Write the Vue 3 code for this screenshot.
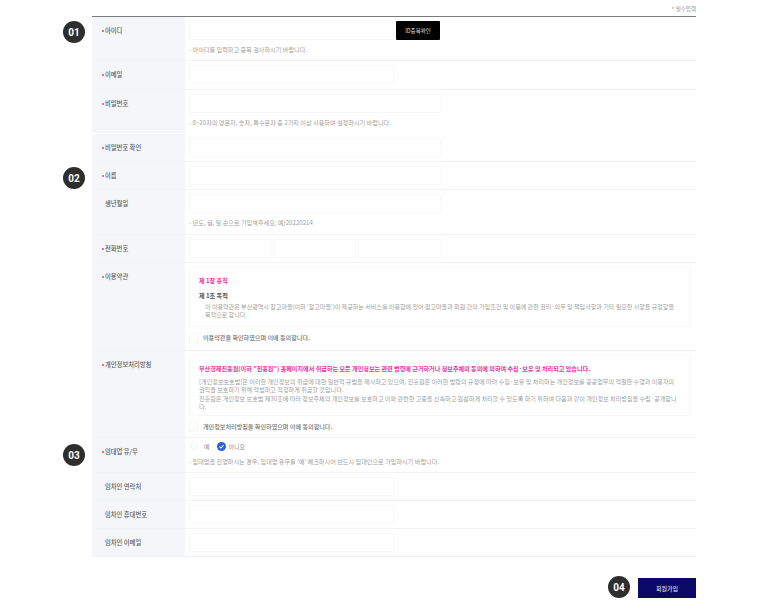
<script setup>
const tenantRows = ['임차인 연락처', '임차인 휴대번호', '임차인 이메일']
</script>

<template>
  <div class="join-page">
    <p class="required-note"><span class="star">*</span> 필수입력</p>

    <div class="form-table">
      <span class="step-badge step-one">01</span>
      <span class="step-badge step-two">02</span>
      <span class="step-badge step-three">03</span>

      <div class="form-row row-hint">
        <div class="form-label required">아이디</div>
        <div class="form-cell">
          <div class="id-line">
            <div class="text-input"></div>
            <button type="button" class="check-btn">ID중복확인</button>
          </div>
          <p class="hint">- 아이디를 입력하고 중복 검사하시기 바랍니다.</p>
        </div>
      </div>

      <div class="form-row row-email">
        <div class="form-label required">이메일</div>
        <div class="form-cell">
          <div class="text-input short"></div>
        </div>
      </div>

      <div class="form-row row-hint no-line">
        <div class="form-label required">비밀번호</div>
        <div class="form-cell">
          <div class="text-input"></div>
          <p class="hint">- 8~20자의 영문자, 숫자, 특수문자 중 2가지 이상 사용하여 설정하시기 바랍니다.</p>
        </div>
      </div>

      <div class="form-row">
        <div class="form-label required">비밀번호 확인</div>
        <div class="form-cell">
          <div class="text-input"></div>
        </div>
      </div>

      <div class="form-row">
        <div class="form-label required">이름</div>
        <div class="form-cell">
          <div class="text-input"></div>
        </div>
      </div>

      <div class="form-row row-birth">
        <div class="form-label">생년월일</div>
        <div class="form-cell">
          <div class="text-input"></div>
          <p class="hint">- 년도, 월, 일 순으로 기입해주세요. 예)20220214</p>
        </div>
      </div>

      <div class="form-row">
        <div class="form-label required">전화번호</div>
        <div class="form-cell">
          <div class="tel-line">
            <div class="text-input"></div>
            <div class="text-input"></div>
            <div class="text-input"></div>
          </div>
        </div>
      </div>

      <div class="form-row row-terms">
        <div class="form-label required">이용약관</div>
        <div class="form-cell">
          <div class="policy-box">
            <p class="pink-title">제 1장 총칙</p>
            <p class="sub-title">제 1조 목적</p>
            <p class="policy-text indent">이 이용약관은 부산광역시 참고마을(이하 '참고마을')이 제공하는 서비스를 이용함에 있어 참고마을과 회원 간의 가입조건 및 이용에 관한 권리·의무 및 책임사항과 기타 필요한 사항을 규정함을 목적으로 합니다.</p>
          </div>
          <label class="agree-line">
            <span class="check-box"></span>
            이용약관을 확인하였으며 이에 동의합니다.
          </label>
        </div>
      </div>

      <div class="form-row row-privacy">
        <div class="form-label required">개인정보처리방침</div>
        <div class="form-cell">
          <div class="policy-box privacy">
            <p class="pink-title">부산경제진흥원(이하 "진흥원") 홈페이지에서 취급하는 모든 개인정보는 관련 법령에 근거하거나 정보주체의 동의에 의하여 수집·보유 및 처리되고 있습니다.</p>
            <p class="policy-text">[개인정보보호법]은 이러한 개인정보의 취급에 대한 일반적 규범을 제시하고 있으며, 진흥원은 이러한 법령의 규정에 따라 수집·보유 및 처리하는 개인정보를 공공업무의 적절한 수행과 이용자의 권익을 보호하기 위해 적법하고 적정하게 취급할 것입니다.</p>
            <p class="policy-text">진흥원은 개인정보 보호법 제30조에 따라 정보주체의 개인정보를 보호하고 이와 관련한 고충을 신속하고 원활하게 처리할 수 있도록 하기 위하여 다음과 같이 개인정보 처리방침을 수립·공개합니다.</p>
          </div>
          <label class="agree-line">
            <span class="check-box"></span>
            개인정보처리방침을 확인하였으며 이에 동의합니다.
          </label>
        </div>
      </div>

      <div class="form-row row-radio">
        <div class="form-label required">임대업 유/무</div>
        <div class="form-cell radio-cell">
          <div class="radio-line">
            <span class="radio-off"></span>
            <span class="radio-text">예</span>
            <svg class="radio-on" viewBox="0 0 10 10">
              <circle cx="5" cy="5" r="5" fill="#2f5fe0" />
              <path d="M2.8 5.1 L4.4 6.7 L7.3 3.6" fill="none" stroke="#fff" stroke-width="1.2" />
            </svg>
            <span class="radio-text">아니요</span>
          </div>
          <p class="hint radio-hint">- 임대업을 진행하시는 경우, 임대업 유무를 '예' 체크하시어 반드시 임대인으로 가입하시기 바랍니다.</p>
        </div>
      </div>

      <div v-for="label in tenantRows" :key="label" class="form-row">
        <div class="form-label">{{ label }}</div>
        <div class="form-cell">
          <div class="text-input short"></div>
        </div>
      </div>
    </div>

    <div class="form-footer">
      <span class="step-badge in-flow">04</span>
      <button type="button" class="submit-btn">회원가입</button>
    </div>
  </div>
</template>

<style scoped>
.join-page {
  width: 604px;
  margin-left: 92px;
  font-family: "Noto Sans CJK KR", "Noto Sans", sans-serif;
  color: #555;
}
p {
  margin: 0;
}
.required-note {
  height: 16px;
  padding-top: 5px;
  box-sizing: border-box;
  text-align: right;
  font-size: 5.5px;
  line-height: 8px;
  color: #888;
}
.star {
  color: #e33;
}
.form-table {
  position: relative;
  border-top: 1px solid #7b7b7b;
}
.form-row {
  display: flex;
  height: 28px;
  border-bottom: 1px solid #f3f3f3;
  box-sizing: border-box;
}
.row-hint {
  height: 44px;
}
.row-email {
  height: 29px;
}
.row-birth {
  height: 45px;
}
.row-terms {
  height: 88px;
}
.row-privacy {
  height: 87px;
}
.row-radio {
  height: 35px;
}
.form-row.no-line {
  border-bottom-color: transparent;
}
.form-label {
  width: 93px;
  flex: none;
  box-sizing: border-box;
  padding: 9px 0 0 13px;
  background: #f4f6fa;
  font-size: 6.3px;
  font-weight: 500;
  line-height: 10px;
  color: #5c5c5c;
}
.required::before {
  content: "";
  display: inline-block;
  width: 2px;
  height: 2px;
  margin: 0 1px 1.5px -3px;
  border-radius: 50%;
  background: #ee4a5e;
}
.form-cell {
  flex: 1;
  min-width: 0;
  padding: 4px 5px 0 4px;
}
.text-input {
  width: 252px;
  height: 19px;
  box-sizing: border-box;
  border: 1px solid #f8f8f8;
  background: #fff;
}
.text-input.short {
  width: 205px;
}
.id-line {
  display: flex;
  justify-content: space-between;
  width: 251px;
}
.id-line .text-input {
  width: 205px;
}
.check-btn {
  width: 44px;
  height: 19px;
  padding: 0;
  border: 0;
  border-radius: 1px;
  background: #000;
  color: #ddd;
  font-family: inherit;
  font-size: 5.5px;
}
.tel-line {
  display: flex;
  gap: 2px;
  width: 252px;
}
.tel-line .text-input {
  flex: 1;
  width: auto;
}
.hint {
  margin-top: 5px;
  font-size: 6.15px;
  line-height: 10px;
  color: #a0a0a0;
  white-space: nowrap;
}
.policy-box {
  width: 502px;
  height: 60px;
  box-sizing: border-box;
  padding: 8px 12px 0 9px;
  border: 1px solid #f8f8f8;
}
.privacy {
  height: 61px;
}
.pink-title {
  font-size: 6.1px;
  font-weight: 700;
  line-height: 10px;
  color: #ec2fa0;
  white-space: nowrap;
}
.sub-title {
  margin-top: 5px;
  font-size: 6.1px;
  font-weight: 700;
  line-height: 10px;
  color: #555;
}
.policy-text {
  font-size: 6.1px;
  line-height: 8.4px;
  color: #a0a0a0;
}
.indent {
  margin-top: 2px;
  padding-left: 6px;
  font-size: 6.05px;
}
.privacy .pink-title + .policy-text {
  margin-top: 4px;
}
.agree-line {
  display: flex;
  align-items: center;
  gap: 5px;
  height: 11px;
  margin-top: 5px;
  font-size: 6.1px;
  font-weight: 500;
  color: #707070;
}
.check-box {
  width: 9px;
  height: 10px;
  box-sizing: border-box;
  border: 1px solid #f5f5f5;
}
.radio-cell {
  padding: 2px 5px 0 5px;
}
.radio-line {
  display: flex;
  align-items: center;
  height: 12px;
  font-size: 6px;
  color: #909090;
}
.radio-off {
  width: 8px;
  height: 8px;
  box-sizing: border-box;
  border: 1px solid #f3f3f3;
  border-radius: 50%;
  margin-right: 6px;
}
.radio-on {
  width: 9px;
  height: 9px;
  margin: 0 3px 0 7px;
}
.radio-hint {
  margin-top: 5px;
  margin-left: -1px;
}
.step-badge {
  width: 22px;
  height: 22px;
  display: flex;
  align-items: center;
  justify-content: center;
  border-radius: 50%;
  background: #2e2e2e;
  color: #fff;
  font-family: Roboto, sans-serif;
  font-size: 10px;
  font-weight: 700;
}
.step-one,
.step-two,
.step-three {
  position: absolute;
  left: -29px;
}
.step-one {
  top: 4px;
}
.step-two {
  top: 150px;
}
.step-three {
  top: 427px;
}
.form-footer {
  display: flex;
  justify-content: flex-end;
  align-items: flex-end;
  gap: 8px;
  margin-top: 19px;
}
.submit-btn {
  width: 58px;
  height: 20px;
  padding: 0;
  border: 0;
  background: #0a0a66;
  color: #d8d8e8;
  font-family: inherit;
  font-size: 6px;
  font-weight: 500;
}
</style>
